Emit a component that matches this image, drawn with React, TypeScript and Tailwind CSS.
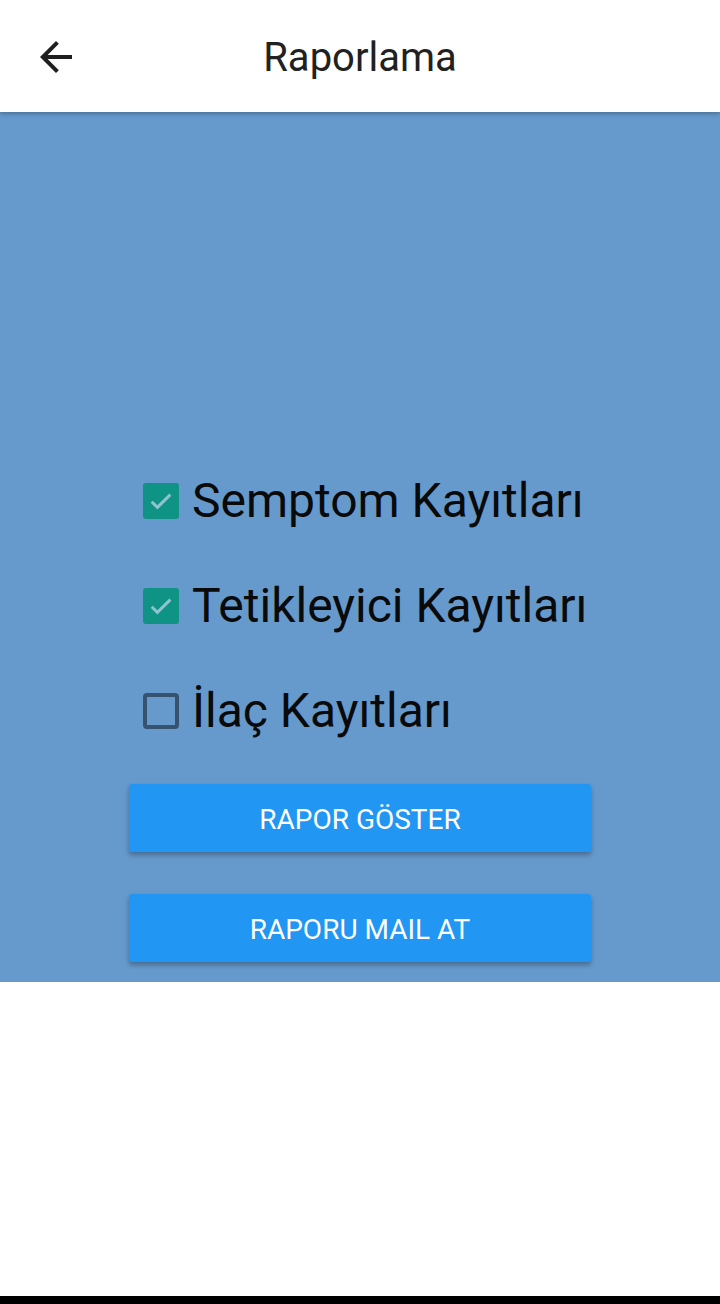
import React, { useState } from 'react';

const rows = [
  { label: 'Semptom Kayıtları', checked: true },
  { label: 'Tetikleyici Kayıtları', checked: true },
  { label: 'İlaç Kayıtları', checked: false },
];

const Checkbox: React.FC<{ checked: boolean }> = ({ checked }) =>
  checked ? (
    <div className="w-[36px] h-[36px] rounded-[3px] bg-[#0f9384] flex items-center justify-center">
      <svg width="32" height="32" viewBox="0 0 24 24" fill="none">
        <path d="M5 12.5l4.3 4.3L19 7.2" stroke="#8fc3cf" strokeWidth="2.2" />
      </svg>
    </div>
  ) : (
    <div className="w-[36px] h-[36px] rounded-[4px] border-[4px] border-[#36526f]" />
  );

const App: React.FC = () => {
  const [items, setItems] = useState(rows);

  const toggle = (i: number) =>
    setItems(items.map((it, idx) => (idx === i ? { ...it, checked: !it.checked } : it)));

  return (
    <div className="w-[720px] h-[1304px] flex flex-col bg-white font-['Roboto',sans-serif]">
      {/* Toolbar */}
      <header className="relative z-10 h-[112px] shrink-0 flex items-center bg-white shadow-[0_2px_4px_rgba(0,0,0,0.25)]">
        <button className="w-[48px] h-[48px] ml-[32px] mt-[2px] flex items-center justify-center">
          <svg width="48" height="48" viewBox="0 0 24 24" fill="#1f1f1f">
            <path d="M20 11H7.83l5.59-5.59L12 4l-8 8 8 8 1.41-1.41L7.83 13H20v-2z" />
          </svg>
        </button>
        <h1 className="absolute left-0 right-0 top-[30px] text-center text-[40px] leading-[56px] text-[#212121] pointer-events-none">
          Raporlama
        </h1>
      </header>

      {/* Content */}
      <main className="bg-[#6699cc] pt-[336px] pb-[20px] flex flex-col">
        {items.map((it, i) => (
          <label
            key={it.label}
            onClick={() => toggle(i)}
            className="h-[105px] pl-[143px] flex items-center gap-[13px] cursor-pointer"
          >
            <Checkbox checked={it.checked} />
            <span className="text-[48px] leading-[56px] text-[#0a0a0a]">{it.label}</span>
          </label>
        ))}

        <div className="mt-[21px] flex flex-col items-center gap-[42px]">
          <button className="w-[462px] h-[68px] pt-[3px] bg-[#2196f3] rounded-[3px] text-white text-[28px] shadow-[0_3px_5px_rgba(0,0,0,0.3)]">
            RAPOR GÖSTER
          </button>
          <button className="w-[462px] h-[68px] pt-[3px] bg-[#2196f3] rounded-[3px] text-white text-[28px] shadow-[0_3px_5px_rgba(0,0,0,0.3)]">
            RAPORU MAIL AT
          </button>
        </div>
      </main>

      <div className="flex-1 bg-white" />
      <div className="h-[8px] bg-black" />
    </div>
  );
};

export default App;
